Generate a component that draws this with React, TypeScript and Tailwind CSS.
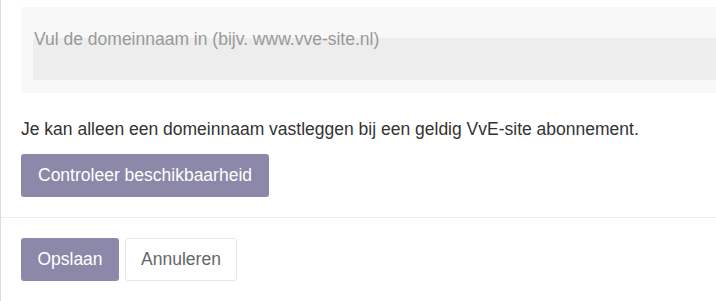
import React, { useState } from 'react';

export default function App() {
  const [domain, setDomain] = useState('');

  return (
    <div
      className="min-h-screen w-[716px] overflow-hidden border-l border-[#dcdcdc] bg-white text-[17.5px] text-[#333]"
      style={{ fontFamily: '"Liberation Sans", Arial, sans-serif' }}
    >
      <div className="pl-[20px] pt-[7px]">
        {/* domain field */}
        <div className="relative bg-[#f8f8f8] pl-[12px] pt-[31px] pb-[13px]">
          <input
            type="text"
            value={domain}
            onChange={(e) => setDomain(e.target.value)}
            className="block h-[42px] w-full rounded-l-[3px] bg-[#ededed] px-[1px] outline-none"
          />
          {!domain && (
            <span className="pointer-events-none absolute left-[13px] top-[20px] leading-[24px] text-[#999]">
              Vul de domeinnaam in (bijv. www.vve-site.nl)
            </span>
          )}
        </div>

        <p className="mt-[24px] leading-[24px]">
          Je kan alleen een domeinnaam vastleggen bij een geldig VvE-site abonnement.
        </p>

        <button
          type="button"
          className="mt-[13px] h-[43px] rounded-[3px] bg-[#8b88a9] px-[17px] text-white"
        >
          Controleer beschikbaarheid
        </button>
      </div>

      <div className="mt-[20px] border-t border-[#ececec]" />

      <div className="flex gap-[6px] pl-[20px] pt-[20px]">
        <button type="button" className="h-[43px] w-[98px] rounded-[3px] bg-[#8b88a9] text-white">
          Opslaan
        </button>
        <button
          type="button"
          className="h-[43px] w-[112px] rounded-[3px] border border-[#e6e6e6] bg-white text-[#666]"
        >
          Annuleren
        </button>
      </div>
    </div>
  );
}
